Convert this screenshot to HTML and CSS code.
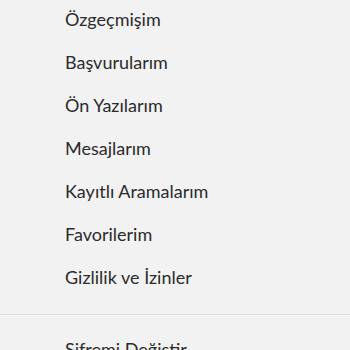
FILE: index.html
```
<!DOCTYPE html>
<html lang="tr">
<head>
<meta charset="utf-8">
<link rel="stylesheet" href="styles.css">
</head>
<body>
<nav class="menu">
  <ul class="list">
    <li class="item">Özgeçmişim</li>
    <li class="item">Başvurularım</li>
    <li class="item">Ön Yazılarım</li>
    <li class="item">Mesajlarım</li>
    <li class="item">Kayıtlı Aramalarım</li>
    <li class="item">Favorilerim</li>
    <li class="item">Gizlilik ve İzinler</li>
  </ul>
  <ul class="list list-bottom">
    <li class="item">Şifremi Değiştir</li>
  </ul>
</nav>
</body>
</html>
```
FILE: styles.css
```
html, body {
  margin: 0;
  padding: 0;
  background: #f2f2f2;
}
body {
  font-family: Lato, "Open Sans", sans-serif;
  color: #2b2b2b;
  overflow: hidden;
  height: 350px;
}
.menu {
  margin-top: -2px;
}
.list {
  list-style: none;
  margin: 0;
  padding: 0 0 15px 65px;
}
.list-bottom {
  border-top: 1px solid #dcdcdc;
  padding-top: 13px;
}
.item {
  font-size: 18px;
  line-height: 21px;
  padding: 11px 0;
}
```
